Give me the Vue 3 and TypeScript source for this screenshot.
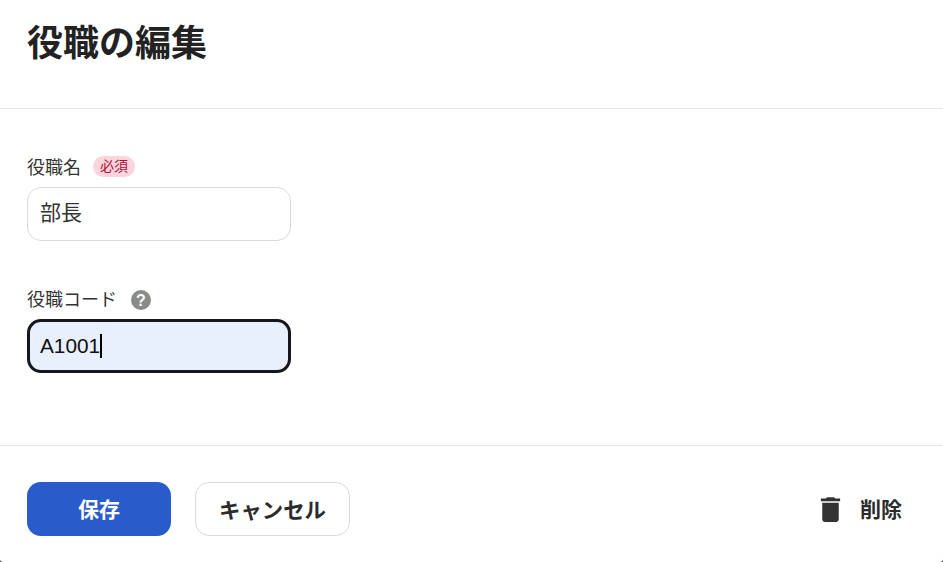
<script setup lang="ts">
const title = '役職の編集'
</script>

<template>
  <div class="dialog">
    <header class="head"><h1>{{ title }}</h1></header>
    <main class="body">
      <div class="field">
        <div class="label"><span>役職名</span><span class="req">必須</span></div>
        <div class="input">部長</div>
      </div>
      <div class="field second">
        <div class="label">
          <span>役職コード</span>
          <svg class="help" viewBox="0 0 20 20" width="20" height="20">
            <circle cx="10" cy="10" r="10" fill="#8a8a8a" />
            <text x="10" y="15.6" text-anchor="middle" font-size="16" font-weight="700" fill="#fff" font-family="Liberation Sans, sans-serif">?</text>
          </svg>
        </div>
        <div class="input focus">A1001<i class="caret"></i></div>
      </div>
    </main>
    <footer class="foot">
      <button class="btn primary">保存</button>
      <button class="btn ghost">キャンセル</button>
      <button class="del">
        <svg viewBox="0 0 24 24" width="33" height="33"><path fill="#333" d="M6 19c0 1.1.9 2 2 2h8c1.1 0 2-.9 2-2V7H6v12zM19 4h-3.5l-1-1h-5l-1 1H5v2h14V4z" /></svg>
        <span class="del-text">削除</span>
      </button>
    </footer>
  </div>
</template>

<style scoped>
.dialog {
  width: 943px;
  height: 562px;
  box-sizing: border-box;
  display: flex;
  flex-direction: column;
  background: #fff;
  border-radius: 0 0 3px 3px;
  font-family: "Liberation Sans", "Noto Sans CJK JP", sans-serif;
  color: #2b2b2b;
}
.head {
  height: 108px;
  box-sizing: content-box;
  border-bottom: 1px solid #e6e6e6;
  padding: 0 27px;
}
h1 {
  margin: 0;
  padding-top: 20px;
  font-size: 36px;
  line-height: 47px;
  font-weight: 700;
  color: #222;
}
.body {
  height: 337px;
  box-sizing: border-box;
  padding: 45px 27px 0;
  border-bottom: 1px solid #e6e6e6;
}
.second { margin-top: 45px; }
.label {
  display: flex;
  align-items: center;
  height: 24px;
  font-size: 18px;
  color: #333;
}
.req {
  margin-left: 12px;
  width: 42px;
  height: 21px;
  border-radius: 11px;
  background: #fbd5dc;
  color: #b0103a;
  font-size: 14px;
  line-height: 21px;
  text-align: center;
}
.help { margin-left: 14px; margin-top: 4px; }
.input {
  width: 264px;
  height: 54px;
  margin-top: 9px;
  box-sizing: border-box;
  border: 1px solid #dadada;
  border-radius: 14px;
  padding: 0 12px;
  font-size: 21px;
  line-height: 50px;
  color: #333;
  background: #fff;
}
.focus {
  display: flex;
  align-items: center;
  border: 3px solid #16161d;
  padding: 0 10px;
  background: #e8f0fd;
  color: #111;
  font-size: 20.8px;
}
.caret {
  width: 2px;
  height: 24px;
  margin-left: 0;
  background: #000;
}
.foot {
  flex: 1;
  display: flex;
  align-items: flex-start;
  padding: 36px 41px 0 27px;
}
.btn {
  height: 54px;
  border-radius: 14px;
  font: 700 21px "Liberation Sans", "Noto Sans CJK JP", sans-serif;
  padding: 0 0 2px;
}
.primary {
  width: 144px;
  border: 0;
  background: #295bca;
  color: #fff;
}
.ghost {
  width: 155px;
  margin-left: 24px;
  background: #fff;
  border: 1px solid #dadada;
  color: #2b2b2b;
  font-size: 21.4px;
}
.del {
  margin-left: auto;
  display: flex;
  align-items: center;
  height: 54px;
  border: 0;
  background: transparent;
  padding: 0;
  font: 700 21px "Liberation Sans", "Noto Sans CJK JP", sans-serif;
  color: #2b2b2b;
  gap: 13px;
}
.del-text { padding-bottom: 2px; }
</style>

<style>
html, body { margin: 0; background: #3a3a3a; overflow: hidden; }
</style>
